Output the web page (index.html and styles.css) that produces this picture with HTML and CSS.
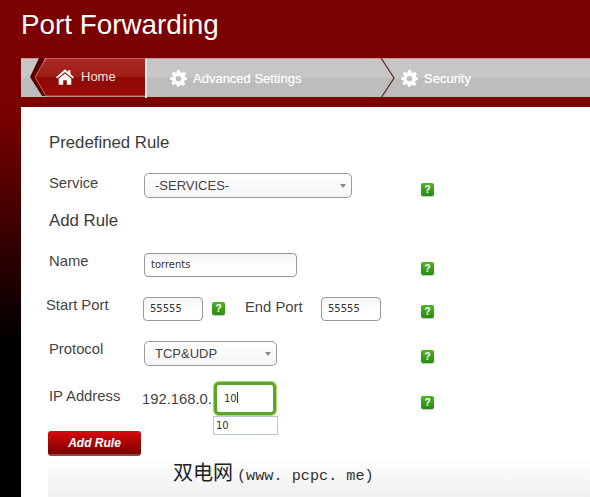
FILE: index.html
```html
<!DOCTYPE html>
<html lang="en">
<head>
    <meta charset="UTF-8">
    <title>Port Forwarding</title>
    <link rel="stylesheet" href="styles.css">
</head>
<body>
    <h1 class="page-title">Port Forwarding</h1>

    <nav class="nav">
        <svg class="nav-home-shape" width="118" height="40" viewBox="0 0 118 40">
            <defs>
                <linearGradient id="homeFill" x1="0" y1="0" x2="0" y2="1">
                    <stop offset="0" stop-color="#a92a22"/>
                    <stop offset="0.48" stop-color="#a01c16"/>
                    <stop offset="0.5" stop-color="#8f0807"/>
                    <stop offset="1" stop-color="#990a08"/>
                </linearGradient>
            </defs>
            <path d="M15 0 L2 0 L9 0 L0 19 L12 38 L18 38 L7 19 Z" fill="#5a0000"/>
            <path d="M16 0.5 H115.5 V38 H16 L5 19 Z" fill="url(#homeFill)" stroke="#c9645c"/>
        </svg>
        <a class="nav-item nav-item-home">
            <svg class="nav-icon" width="18" height="16" viewBox="0 0 20 17">
                <path d="M10 0 L13.5 3 V1 H16 V5.2 L20 8.7 L18.7 10.2 L10 2.9 L1.3 10.2 L0 8.7 Z" fill="#fff"/>
                <path d="M10 4.6 L17 10.4 V17 H12 V12 H8 V17 H3 V10.4 Z" fill="#fff"/>
            </svg>
            Home
        </a>
        <a class="nav-item nav-item-advanced">
            <svg class="nav-icon" width="17" height="17" viewBox="0 0 24 24">
                <path d="M10 0h4l.7 3.4 2.2.9 2.9-1.9 2.8 2.8-1.9 2.9.9 2.2L24 11v3l-3.4.7-.9 2.2 1.9 2.9-2.8 2.8-2.9-1.9-2.2.9L13 24h-3l-.7-3.4-2.2-.9-2.9 1.9-2.4-2.8 1.9-2.9-.9-2.2L0 14v-3l3.4-.7.9-2.2L2.4 5.2l2.8-2.8 2.9 1.9 1.2-.9zM12 8a4 4 0 1 0 0 8 4 4 0 0 0 0-8z" fill="#fff" fill-rule="evenodd"/>
            </svg>
            Advanced Settings
        </a>
        <svg class="nav-arrow" width="16" height="41" viewBox="0 0 16 41">
            <path d="M1 0 L14 20 L1 40" fill="none" stroke="#5c2420" stroke-width="1.2"/>
        </svg>
        <a class="nav-item nav-item-security">
            <svg class="nav-icon" width="17" height="17" viewBox="0 0 24 24">
                <path d="M10 0h4l.7 3.4 2.2.9 2.9-1.9 2.8 2.8-1.9 2.9.9 2.2L24 11v3l-3.4.7-.9 2.2 1.9 2.9-2.8 2.8-2.9-1.9-2.2.9L13 24h-3l-.7-3.4-2.2-.9-2.9 1.9-2.4-2.8 1.9-2.9-.9-2.2L0 14v-3l3.4-.7.9-2.2L2.4 5.2l2.8-2.8 2.9 1.9 1.2-.9zM12 8a4 4 0 1 0 0 8 4 4 0 0 0 0-8z" fill="#fff" fill-rule="evenodd"/>
            </svg>
            Security
        </a>
    </nav>

    <main class="panel">
        <h2 class="section-title section-predefined">Predefined Rule</h2>

        <div class="row row-service">
            <label class="row-label label-service">Service</label>
            <div class="select select-service">-SERVICES-<span class="select-caret"></span></div>
            <span class="help help-end">?</span>
        </div>

        <h2 class="section-title section-add">Add Rule</h2>

        <div class="row row-name">
            <label class="row-label">Name</label>
            <div class="field field-name">torrents</div>
            <span class="help help-name">?</span>
        </div>

        <div class="row row-ports">
            <label class="row-label label-start">Start Port</label>
            <div class="field field-port">55555</div>
            <span class="help help-port">?</span>
            <label class="label-end">End Port</label>
            <div class="field field-port">55555</div>
            <span class="help help-port-end">?</span>
        </div>

        <div class="row row-protocol">
            <label class="row-label">Protocol</label>
            <div class="select select-protocol">TCP&amp;UDP<span class="select-caret"></span></div>
            <span class="help help-protocol">?</span>
        </div>

        <div class="row row-ip">
            <label class="row-label label-ip">IP Address</label>
            <span class="ip-prefix">192.168.0.</span>
            <div class="ip-wrap">
                <div class="field field-ip">10<span class="text-cursor"></span></div>
                <div class="autocomplete">10</div>
            </div>
            <span class="help help-ip">?</span>
        </div>

        <button class="add-btn">Add Rule</button>

        <div class="footer-band"></div>
        <div class="watermark">双电网<span class="watermark-url">(www. pcpc. me)</span></div>
    </main>
</body>
</html>
```

FILE: styles.css
```css
html, body {
    margin: 0;
    padding: 0;
}

body {
    width: 590px;
    height: 497px;
    overflow: hidden;
    background: linear-gradient(to bottom, #7b0000 0, #7b0000 110px, #000 340px);
    font-family: "Liberation Sans", Arial, sans-serif;
    color: #333;
}

.page-title {
    margin: 0;
    height: 58px;
    padding: 7px 0 0 21px;
    box-sizing: border-box;
    font-size: 27.8px;
    line-height: 36px;
    font-weight: normal;
    color: #fff;
}

/* nav bar */
.nav {
    position: relative;
    display: flex;
    align-items: center;
    height: 39px;
    margin-left: 21px;
    background: linear-gradient(to bottom, #c6c6c6 0, #c6c6c6 50%, #bcbcbc 50%, #bebebe 100%);
    border-top: 1px solid #cf9a9a;
    box-sizing: border-box;
}

.nav-home-shape {
    position: absolute;
    left: 9px;
    top: -1px;
}

.nav-item {
    position: relative;
    display: flex;
    align-items: center;
    color: #fff;
    font-size: 13px;
}

.nav-icon {
    margin-right: 6px;
}

.nav-item-home {
    width: 89px;
    margin-left: 35px;
    margin-top: -3px;
    color: #f2e2e0;
}

.nav-item-home .nav-icon {
    margin-right: 7px;
}

.nav-item-advanced {
    width: 190px;
    padding-left: 23px;
    box-sizing: border-box;
    height: 39px;
    border-left: 2px solid #e8e8e8;
    text-shadow: 0 0 1px rgba(255,255,255,0.6);
}

.nav-arrow {
    flex: none;
    margin-left: 45px;
}

.nav-item-security {
    margin-left: 5px;
    text-shadow: 0 0 1px rgba(255,255,255,0.6);
}

/* main panel */
.panel {
    position: relative;
    height: 390px;
    margin: 10px 0 0 21px;
    padding: 1px 0 0 28px;
    box-sizing: border-box;
    background: #fff;
}

.section-title {
    margin: 0;
    font-size: 16.8px;
    line-height: 20px;
    font-weight: normal;
    color: #3a3a3a;
}

.section-predefined {
    margin-top: 25px;
}

.section-add {
    margin-top: 14px;
}

.row {
    display: flex;
    align-items: center;
    height: 24px;
}

.row-label {
    flex: none;
    width: 95px;
    margin-top: -9px;
    font-size: 14.8px;
    color: #444;
}

.label-service {
    margin-top: -5px;
}

.row-service {
    margin-top: 20px;
}

.row-name {
    margin-top: 22px;
}

.row-ports {
    margin-top: 20px;
}

.row-protocol {
    margin-top: 20px;
}

.row-ip {
    margin-top: 17px;
    height: 33px;
    align-items: flex-start;
}

/* inputs */
.field {
    box-sizing: border-box;
    height: 24px;
    padding-left: 6px;
    border: 1px solid #999;
    border-radius: 4px;
    background: linear-gradient(to bottom, #f4f4f4, #fff 60%);
    font-family: "DejaVu Sans", sans-serif;
    font-size: 10px;
    line-height: 22px;
    color: #333;
}

.field-name {
    width: 153px;
}

.field-port {
    flex: none;
    width: 60px;
}

.select {
    position: relative;
    box-sizing: border-box;
    height: 25px;
    padding-left: 10px;
    border: 1px solid #999;
    border-radius: 5px;
    background: linear-gradient(to bottom, #fff, #f4f4f4);
    font-size: 13px;
    line-height: 24px;
    color: #444;
}

.select-service {
    width: 208px;
}

.select-protocol {
    width: 133px;
}

.select-caret {
    position: absolute;
    right: 5px;
    top: 10px;
    width: 0;
    height: 0;
    border-left: 3px solid transparent;
    border-right: 3px solid transparent;
    border-top: 4px solid #888;
}

/* help badges */
.help {
    flex: none;
    box-sizing: border-box;
    width: 13px;
    height: 13px;
    border-radius: 2px;
    background: linear-gradient(to bottom, #4fb524, #2a8a10);
    box-shadow: 0 1px 1px rgba(0,0,0,0.25);
    color: #fff;
    font-size: 10px;
    font-weight: bold;
    line-height: 13px;
    text-align: center;
}

.help-end {
    margin-left: 69px;
    margin-top: 8px;
}

.help-name {
    margin-left: 124px;
    margin-top: 6px;
}

.label-start {
    width: 97px;
    margin-left: -3px;
}

.help-port {
    margin-left: 9px;
    margin-top: -1px;
}

.label-end {
    flex: none;
    width: 76px;
    margin-left: 20px;
    margin-top: -5px;
    font-size: 14.8px;
    color: #444;
}

.help-port-end {
    margin-left: 40px;
    margin-top: 4px;
}

.help-protocol {
    margin-left: 144px;
    margin-top: 6px;
}

.label-ip {
    width: 93px;
    margin-top: 6px;
}

.ip-prefix {
    flex: none;
    width: 72px;
    margin-top: 9px;
    font-size: 14.8px;
    color: #444;
}

.ip-wrap {
    position: relative;
    flex: none;
    width: 64px;
    height: 33px;
}

.field-ip {
    width: 62px;
    height: 33px;
    padding-left: 7px;
    border: 3px solid #5aa52a;
    border-radius: 5px;
    background: #fff;
    box-shadow: 0 0 1px 1px #a3d16b;
    line-height: 27px;
}

.text-cursor {
    display: inline-block;
    width: 1px;
    height: 11px;
    background: #333;
    vertical-align: -1px;
}

.autocomplete {
    position: absolute;
    left: -1px;
    top: 34px;
    box-sizing: border-box;
    width: 65px;
    height: 19px;
    padding-left: 2px;
    border: 1px solid #b8c6d8;
    background: #fff;
    font-family: "DejaVu Sans", sans-serif;
    font-size: 10px;
    line-height: 17px;
    color: #333;
}

.help-ip {
    margin-left: 143px;
    margin-top: 14px;
}

.add-btn {
    display: block;
    width: 93px;
    height: 25px;
    margin: 16px 0 0 -1px;
    padding: 0;
    border: none;
    border-bottom: 2px solid #8c4a44;
    border-radius: 3px;
    background: linear-gradient(to bottom, #d80a0c, #7c0000);
    color: #fff;
    font-family: "Liberation Sans", Arial, sans-serif;
    font-size: 12px;
    font-weight: bold;
    font-style: italic;
}

.footer-band {
    height: 41px;
    margin-left: -1px;
    background: linear-gradient(to bottom, #fff, #f0f0f0);
}

.watermark {
    position: absolute;
    left: 152px;
    top: 353px;
    font-family: "Noto Sans CJK SC", sans-serif;
    font-size: 20px;
    line-height: 24px;
    white-space: nowrap;
    color: #222;
}

.watermark-url {
    margin-left: 4px;
    font-family: "Liberation Mono", monospace;
    font-size: 15.2px;
    color: #333;
}
```
